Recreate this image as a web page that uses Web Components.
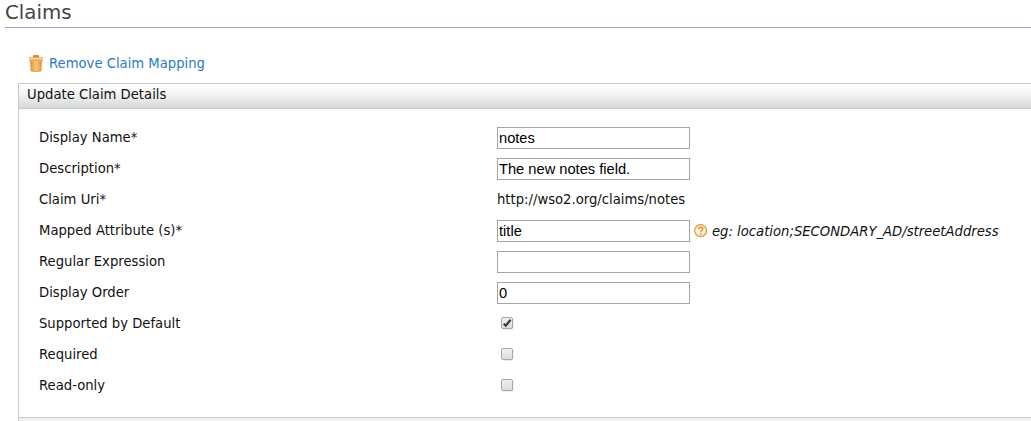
<!DOCTYPE html>
<html lang="en"><head><meta charset="utf-8"><title>Claims</title>
<style>
html,body{margin:0;height:100%;overflow:hidden;background:#fff}
body{font:13.2px/16px "DejaVu Sans",sans-serif;color:#111}
</style></head><body>
<claims-page>
<trash-link slot="action">Remove Claim Mapping</trash-link>
<claim-panel heading="Update Claim Details">
<form-row label="Display Name*"><text-box value="notes"></text-box></form-row>
<form-row label="Description*"><text-box value="The new notes field."></text-box></form-row>
<form-row label="Claim Uri*">http://wso2.org/claims/notes</form-row>
<form-row label="Mapped Attribute (s)*"><text-box value="title"></text-box><help-hint>eg: location;SECONDARY_AD/streetAddress</help-hint></form-row>
<form-row label="Regular Expression"><text-box value=""></text-box></form-row>
<form-row label="Display Order"><text-box value="0"></text-box></form-row>
<form-row label="Supported by Default"><check-box checked></check-box></form-row>
<form-row label="Required"><check-box></check-box></form-row>
<form-row label="Read-only"><check-box></check-box></form-row>
</claim-panel>
</claims-page>
<script>
const define = (name, render) => customElements.define(name, class extends HTMLElement {
  connectedCallback() {
    if (!this.shadowRoot) this.attachShadow({mode: 'open'}).innerHTML = render(this);
  }
});
define('claims-page', () => `<style>
:host{display:block;height:421px;overflow:hidden}
h2{font-weight:400;font-size:19.8px;line-height:26px;color:#444;margin:0 0 0 5px;height:27px;border-bottom:1px solid #98a5cb}
.action{display:flex;height:55px;padding-left:28px;box-sizing:border-box;padding-top:26px}
</style><h2>Claims</h2><div class="action"><slot name="action"></slot></div><slot></slot>`);
define('trash-link', () => `<style>
:host{display:flex;color:#2b7bc4;line-height:20px}svg{display:block;margin:1px 5px 0 0}
</style><svg width="16" height="17" viewBox="0 0 16 17">
<defs><linearGradient id="g"><stop stop-color="#e08a35"/><stop offset=".3" stop-color="#f0b75c"/><stop offset=".5" stop-color="#f6d27c"/><stop offset=".75" stop-color="#edb857"/><stop offset="1" stop-color="#dc8833"/></linearGradient><linearGradient id="l" x2="0" y2="1"><stop stop-color="#e8a05a"/><stop offset=".45" stop-color="#fad9b4"/><stop offset="1" stop-color="#e3903f"/></linearGradient></defs>
<path d="M5.5 2V.7h5V2" fill="#d98637" stroke="#d07c2c"/>
<path d="M2 5h12l-.6 11q-5.4 1-10.8 0z" fill="url(#g)"/>
<path d="M5.5 7v7.5M8 7v7.5M10.5 7v7.5" stroke="#e5ac50" stroke-width=".8"/>
<rect x="1" y="2" width="14" height="4" rx="1" fill="url(#l)"/><path d="M3 15.8q5 1 10 0" fill="none" stroke="#de9544"/>
</svg><span><slot></slot></span>`);
define('claim-panel', el => `<style>
:host{display:block;margin-left:18px;border:solid #c8c9ca;border-width:1px 0 0 1px}
header{height:24px;line-height:22px;padding-left:8px;background:linear-gradient(#fff,#f5f6f6 35%,#d7d8da);border-bottom:1px solid #c8c9ca}
.rows{padding:13px 0 0 20px;height:295px}
footer{height:10px;background:#f1f1f2;border-top:1px solid #c8c9ca}
</style><header>${el.getAttribute('heading')}</header><div class="rows"><slot></slot></div><footer></footer>`);
define('form-row', el => `<style>
:host{display:grid;grid-template-columns:458px 1fr;height:31px;align-items:center}
label{line-height:16px;padding-top:1px}.field{display:flex;align-items:center;line-height:16px}
</style><label>${el.getAttribute('label')}</label><div class="field"><slot></slot></div>`);
define('text-box', el => `<style>
:host{display:block}input{display:block;box-sizing:border-box;width:193px;height:22px;margin:1px 0 0;padding:1px;border:1px solid #a5a5a5;background:#fff;color:#000;font:14.67px "Liberation Sans",sans-serif;outline:0;border-radius:0}
</style><input type="text" aria-label="value" value="${el.getAttribute('value')}">`);
define('help-hint', () => `<style>
:host{display:flex;align-items:center;font-style:italic}svg{display:block;margin:0 4px 0 4px}span{padding-top:2px}
</style><svg width="14" height="14" viewBox="0 0 14 14"><circle cx="6.6" cy="6.6" r="5.9" fill="#fff3d2" stroke="#c39a3c" stroke-width="1.2"/><circle cx="6.6" cy="6.6" r="5" fill="none" stroke="#f0d996" stroke-width=".6"/><path d="M4.5 5.1Q4.5 3.2 6.6 3.2t2.2 1.8C8.8 6.6 6.7 6.5 6.7 8.3" fill="none" stroke="#ec8a3c" stroke-width="1.4"/><path d="M6 9h1.4v1.4H6z" fill="#ec8a3c"/></svg><span><slot></slot></span>`);
define('check-box', el => `<style>
:host{display:block;margin-left:4px}svg{display:block}
</style><svg width="13" height="13" viewBox="0 0 13 13" role="checkbox" aria-checked="${el.hasAttribute('checked')}"><defs><linearGradient id="b" x2="0" y2="1"><stop stop-color="#efefef"/><stop offset="1" stop-color="#dcdcdc"/></linearGradient></defs><rect x="1" y="1.3" width="11.5" height="11.5" rx="2" fill="#e5e5e5"/><rect x=".5" y=".5" width="11" height="11" rx="1.5" fill="url(#b)" stroke="#a8a8a8"/>${el.hasAttribute('checked') ? '<path d="M2.8 6.7 4.8 8.7 9.6 2.8" fill="none" stroke="#3c3c3c" stroke-width="2.2"/>' : ''}</svg>`);
</script></body></html>
